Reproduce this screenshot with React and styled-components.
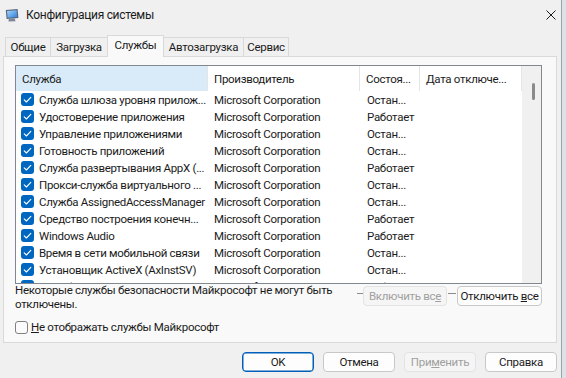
import React from "react";
import styled, { createGlobalStyle } from "styled-components";

const GlobalStyle = createGlobalStyle`
  html, body {
    margin: 0;
    padding: 0;
  }
  body {
    width: 566px;
    height: 378px;
    overflow: hidden;
    background: #dde1e8;
    font-family: Roboto, "Noto Sans", sans-serif;
    font-size: 11.5px;
    letter-spacing: -0.3px;
    color: #1b1b1b;
  }
  * {
    box-sizing: border-box;
  }
`;

const Window = styled.div`
  width: 562px;
  height: 378px;
  background: #f0f0f0;
  border-right: 1px solid #9ca1aa;
  display: flex;
  flex-direction: column;
`;

const TitleBar = styled.div`
  height: 30px;
  display: flex;
  align-items: center;
  padding: 0 5px 0 5px;
`;

const Title = styled.span`
  margin-left: 7px;
  font-size: 12px;
`;

const Close = styled.div`
  margin-left: auto;
  display: flex;
  align-items: center;
`;

const TabStrip = styled.div`
  height: 26px;
  display: flex;
  align-items: flex-end;
  padding-left: 5px;
`;

const Tab = styled.div`
  width: ${(p) => p.w}px;
  height: ${(p) => (p.active ? 22 : 19)}px;
  margin-right: -1px;
  margin-bottom: ${(p) => (p.active ? -1 : 0)}px;
  padding-bottom: ${(p) => (p.active ? 3 : 1)}px;
  position: relative;
  z-index: ${(p) => (p.active ? 2 : 1)};
  display: flex;
  align-items: center;
  justify-content: center;
  background: ${(p) => (p.active ? "#f9f9f9" : "#f0f0f0")};
  border: 1px solid #d9d9d9;
  border-bottom: none;
  white-space: nowrap;
`;

const Panel = styled.div`
  margin: 0 4px 0 3px;
  height: 287px;
  background: #f9f9f9;
  border: 1px solid #d9d9d9;
  padding: 8px 14px 0 11px;
  display: flex;
  flex-direction: column;
`;

const List = styled.div`
  width: 527px;
  height: 219px;
  flex-shrink: 0;
  background: #fff;
  border: 1px solid #828790;
  display: flex;
  overflow: hidden;
`;

const Table = styled.div`
  width: 506px;
  display: flex;
  flex-direction: column;
`;

const HeaderRow = styled.div`
  height: 25px;
  flex-shrink: 0;
  display: flex;
`;

const HeaderCell = styled.div`
  width: ${(p) => p.w}px;
  padding-left: 6px;
  display: flex;
  align-items: center;
  background: ${(p) => (p.active ? "#d9ebf9" : "#fff")};
  border-right: 1px solid #e5e5e5;
  white-space: nowrap;
  overflow: hidden;
`;

const Row = styled.div`
  height: 17px;
  flex-shrink: 0;
  display: flex;
  align-items: center;
`;

const Cell = styled.div`
  width: ${(p) => p.w}px;
  flex-shrink: 0;
  padding-left: ${(p) => p.pad}px;
  display: flex;
  align-items: center;
  gap: 5px;
  white-space: nowrap;
  overflow: hidden;
`;

const CheckBox = styled.span`
  width: 13px;
  height: 13px;
  flex-shrink: 0;
  display: flex;
`;

const Scrollbar = styled.div`
  width: 19px;
  flex-shrink: 0;
  background: #f0f0f0;
  padding: 17px 0 0 10px;
`;

const Thumb = styled.div`
  width: 3px;
  height: 17px;
  border-radius: 2px;
  background: #8a8a8a;
`;

const Footer = styled.div`
  display: flex;
  align-items: flex-start;
`;

const Note = styled.div`
  margin-top: -1px;
  line-height: 14px;
`;

const Group = styled.div`
  margin-left: auto;
  display: flex;
  align-items: flex-start;
  padding-top: 2px;
`;

const Dash = styled.div`
  width: ${(p) => p.w}px;
  height: 1px;
  margin: 7px 0 0 ${(p) => p.gap}px;
  background: #8c8c8c;
`;

const Button = styled.div`
  width: ${(p) => p.w}px;
  height: 20px;
  margin-left: ${(p) => p.gap || 0}px;
  display: flex;
  align-items: center;
  justify-content: center;
  border-radius: 4px;
  white-space: pre;
  background: ${(p) => (p.disabled ? "#f5f5f5" : "#fdfdfd")};
  color: ${(p) => (p.disabled ? "#a0a0a0" : "#1b1b1b")};
  border: 1px solid
    ${(p) => (p.primary ? "#005fb8" : p.disabled ? "#e3e3e3" : "#c8c8c8")};
  box-shadow: ${(p) => (p.primary ? "inset 0 0 0 0.5px #005fb8" : "none")};
`;

const Option = styled.label`
  margin-top: 9px;
  display: flex;
  align-items: center;
  gap: 3px;
`;

const EmptyBox = styled.span`
  width: 13px;
  height: 13px;
  border: 1px solid #808080;
  border-radius: 3px;
  background: #fbfbfb;
`;

const U = styled.span`
  text-decoration: underline;
  text-underline-offset: 1px;
`;

const Actions = styled.div`
  margin-top: 9px;
  padding-right: 4px;
  display: flex;
  justify-content: flex-end;
  gap: 9px;
`;

const Check = () => (
  <CheckBox>
    <svg width="13" height="13" viewBox="0 0 13 13">
      <rect x="0" y="0" width="13" height="13" rx="3" fill="#0067c0" />
      <path
        d="M3.2 6.8 L5.4 9 L9.8 4.4"
        fill="none"
        stroke="#fff"
        strokeWidth="1.1"
        strokeLinecap="round"
        strokeLinejoin="round"
      />
    </svg>
  </CheckBox>
);

const AppIcon = () => (
  <svg width="14" height="14" viewBox="0 0 14 14">
    <defs>
      <linearGradient id="scr" x1="0" y1="0" x2="1" y2="1">
        <stop offset="0" stopColor="#a9d6ff" />
        <stop offset="1" stopColor="#2b7fd8" />
      </linearGradient>
    </defs>
    <path d="M0.8 2 L12.6 1 L13.4 10 L1.6 11 Z" fill="#55667c" />
    <path d="M2 3 L11.6 2.2 L12.2 9 L2.6 9.8 Z" fill="url(#scr)" />
    <path d="M4 10.6 L9.6 10.2 L10.6 13.2 L3.4 13.6 Z" fill="#7c8899" />
  </svg>
);

const tabs = [
  { label: "Общие", w: 46 },
  { label: "Загрузка", w: 58 },
  { label: "Службы", w: 57, active: true },
  { label: "Автозагрузка", w: 81 },
  { label: "Сервис", w: 46 },
];

const columns = [
  { label: "Служба", w: 192, active: true },
  { label: "Производитель", w: 152 },
  { label: "Состоя...", w: 60 },
  { label: "Дата отключе...", w: 102 },
];

const STOP = "Остан...";
const RUN = "Работает";

const services = [
  ["Служба шлюза уровня прилож...", STOP],
  ["Удостоверение приложения", RUN],
  ["Управление приложениями", STOP],
  ["Готовность приложений", STOP],
  ["Служба развертывания AppX (...", RUN],
  ["Прокси-служба виртуального ...", STOP],
  ["Служба AssignedAccessManager", STOP],
  ["Средство построения конечн...", RUN],
  ["Windows Audio", RUN],
  ["Время в сети мобильной связи", STOP],
  ["Установщик ActiveX (AxInstSV)", STOP],
  ["Служба модуля архивации", RUN],
];

export default function App() {
  return (
    <>
      <GlobalStyle />
      <Window>
        <TitleBar>
          <AppIcon />
          <Title>Конфигурация системы</Title>
          <Close>
            <svg width="10" height="10" viewBox="0 0 10 10">
              <path d="M0.5 0.5 L9.5 9.5 M9.5 0.5 L0.5 9.5" stroke="#1b1b1b" strokeWidth="1" />
            </svg>
          </Close>
        </TitleBar>

        <TabStrip>
          {tabs.map((t) => (
            <Tab key={t.label} w={t.w} active={t.active}>
              {t.label}
            </Tab>
          ))}
        </TabStrip>

        <Panel>
          <List>
            <Table>
              <HeaderRow>
                {columns.map((c) => (
                  <HeaderCell key={c.label} w={c.w} active={c.active}>
                    {c.label}
                  </HeaderCell>
                ))}
              </HeaderRow>
              {services.map(([name, state], i) => (
                <Row key={i}>
                  <Cell w={192} pad={5}>
                    <Check />
                    <span>{name}</span>
                  </Cell>
                  <Cell w={152} pad={6}>Microsoft Corporation</Cell>
                  <Cell w={60} pad={7}>{state}</Cell>
                  <Cell w={102} pad={6} />
                </Row>
              ))}
            </Table>
            <Scrollbar>
              <Thumb />
            </Scrollbar>
          </List>

          <Footer>
            <Note>
              Некоторые службы безопасности Майкрософт не могут быть
              <br />
              отключены.
            </Note>
            <Group>
              <Dash w={6} gap={0} />
              <Button w={84} disabled>
                {"Включить вс"}
                <U>е</U>
              </Button>
              <Dash w={8} gap={1} />
              <Button w={85} gap={1}>
                {"Отключить "}
                <U>в</U>
                {"се"}
              </Button>
            </Group>
          </Footer>

          <Option>
            <EmptyBox />
            <span>
              <U>Н</U>
              {"е отображать службы Майкрософт"}
            </span>
          </Option>
        </Panel>

        <Actions>
          <Button w={72} primary>OK</Button>
          <Button w={72}>Отмена</Button>
          <Button w={72} disabled>
            {"При"}
            <U>м</U>
            {"енить"}
          </Button>
          <Button w={72}>Справка</Button>
        </Actions>
      </Window>
    </>
  );
}
